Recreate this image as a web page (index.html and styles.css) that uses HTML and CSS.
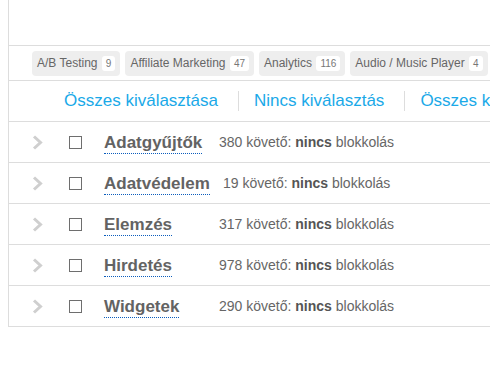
FILE: index.html
```html
<!DOCTYPE html>
<html lang="hu">
<head>
<meta charset="utf-8">
<link rel="stylesheet" href="styles.css">
</head>
<body>
<div class="panel">
  <div class="header"></div>
  <div class="tags">
    <span class="tag">A/B Testing <span class="count">9</span></span>
    <span class="tag">Affiliate Marketing <span class="count">47</span></span>
    <span class="tag">Analytics <span class="count">116</span></span>
    <span class="tag">Audio / Music Player <span class="count">4</span></span>
  </div>
  <div class="links">
    <a class="link">Összes kiválasztása</a>
    <a class="link">Nincs kiválasztás</a>
    <a class="link">Összes k</a>
  </div>
  <ul class="rows">
    <li class="row">
      <span class="chev"><svg width="11" height="15" viewBox="0 0 11 15"><polyline points="2,1.5 8.5,7.5 2,13.5" fill="none" stroke="#cfcfcf" stroke-width="3"/></svg></span>
      <span class="box"></span>
      <span class="name-col"><span class="name">Adatgyűjtők</span></span>
      <span class="desc">380 követő: <b>nincs</b> blokkolás</span>
    </li>
    <li class="row">
      <span class="chev"><svg width="11" height="15" viewBox="0 0 11 15"><polyline points="2,1.5 8.5,7.5 2,13.5" fill="none" stroke="#cfcfcf" stroke-width="3"/></svg></span>
      <span class="box"></span>
      <span class="name-col"><span class="name">Adatvédelem</span></span>
      <span class="desc desc-short">19 követő: <b>nincs</b> blokkolás</span>
    </li>
    <li class="row">
      <span class="chev"><svg width="11" height="15" viewBox="0 0 11 15"><polyline points="2,1.5 8.5,7.5 2,13.5" fill="none" stroke="#cfcfcf" stroke-width="3"/></svg></span>
      <span class="box"></span>
      <span class="name-col"><span class="name">Elemzés</span></span>
      <span class="desc">317 követő: <b>nincs</b> blokkolás</span>
    </li>
    <li class="row">
      <span class="chev"><svg width="11" height="15" viewBox="0 0 11 15"><polyline points="2,1.5 8.5,7.5 2,13.5" fill="none" stroke="#cfcfcf" stroke-width="3"/></svg></span>
      <span class="box"></span>
      <span class="name-col"><span class="name">Hirdetés</span></span>
      <span class="desc">978 követő: <b>nincs</b> blokkolás</span>
    </li>
    <li class="row">
      <span class="chev"><svg width="11" height="15" viewBox="0 0 11 15"><polyline points="2,1.5 8.5,7.5 2,13.5" fill="none" stroke="#cfcfcf" stroke-width="3"/></svg></span>
      <span class="box"></span>
      <span class="name-col"><span class="name">Widgetek</span></span>
      <span class="desc">290 követő: <b>nincs</b> blokkolás</span>
    </li>
  </ul>
</div>
</body>
</html>
```

FILE: styles.css
```css
html, body {
  margin: 0;
  padding: 0;
  background: #fff;
}
body {
  font-family: "Liberation Sans", Arial, sans-serif;
  color: #666;
}
.panel {
  margin-left: 8px;
  width: 482px;
  box-sizing: border-box;
  border-left: 1px solid #ddd;
  overflow: hidden;
}
.header {
  height: 45px;
}
.tags {
  display: flex;
  align-items: center;
  gap: 5px;
  height: 34px;
  padding-left: 23px;
  border-top: 1px solid #ddd;
  border-bottom: 1px solid #ddd;
  white-space: nowrap;
  overflow: hidden;
}
.tag {
  flex: none;
  display: flex;
  align-items: center;
  height: 25px;
  padding: 0 5px;
  background: #eeeeee;
  border-radius: 4px;
  font-size: 12px;
  color: #666;
  white-space: pre;
}
.count {
  display: inline-flex;
  align-items: center;
  height: 15px;
  padding: 0 4px;
  margin-left: 1px;
  background: #fff;
  border-radius: 3px;
  font-size: 10px;
  color: #777;
}
.links {
  display: flex;
  align-items: center;
  height: 40px;
  padding-left: 40px;
  border-bottom: 1px solid #ddd;
  white-space: nowrap;
  overflow: hidden;
}
.link {
  flex: none;
  padding: 0 20px 0 15px;
  font-size: 17px;
  line-height: 20px;
  color: #1aa9e8;
  cursor: pointer;
}
.link + .link {
  border-left: 1px solid #ddd;
}
.rows {
  list-style: none;
  margin: 0;
  padding: 0;
}
.row {
  display: flex;
  align-items: center;
  height: 40px;
  border-bottom: 1px solid #ddd;
  padding-left: 23px;
  white-space: nowrap;
}
.chev {
  flex: none;
  width: 11px;
  height: 15px;
  display: flex;
}
.box {
  flex: none;
  width: 11px;
  height: 11px;
  border: 1px solid #6e6e6e;
  margin-left: 26px;
  margin-right: 22px;
}
.name-col {
  flex: none;
  width: 115px;
}
.name {
  display: inline-block;
  font-size: 17px;
  font-weight: bold;
  color: #636363;
  border-bottom: 1px dotted #0b5dbd;
  padding-top: 2px;
}
.desc {
  font-size: 14px;
  color: #666;
}
.desc b {
  color: #555;
}
.desc-short {
  padding-left: 4px;
}
```
